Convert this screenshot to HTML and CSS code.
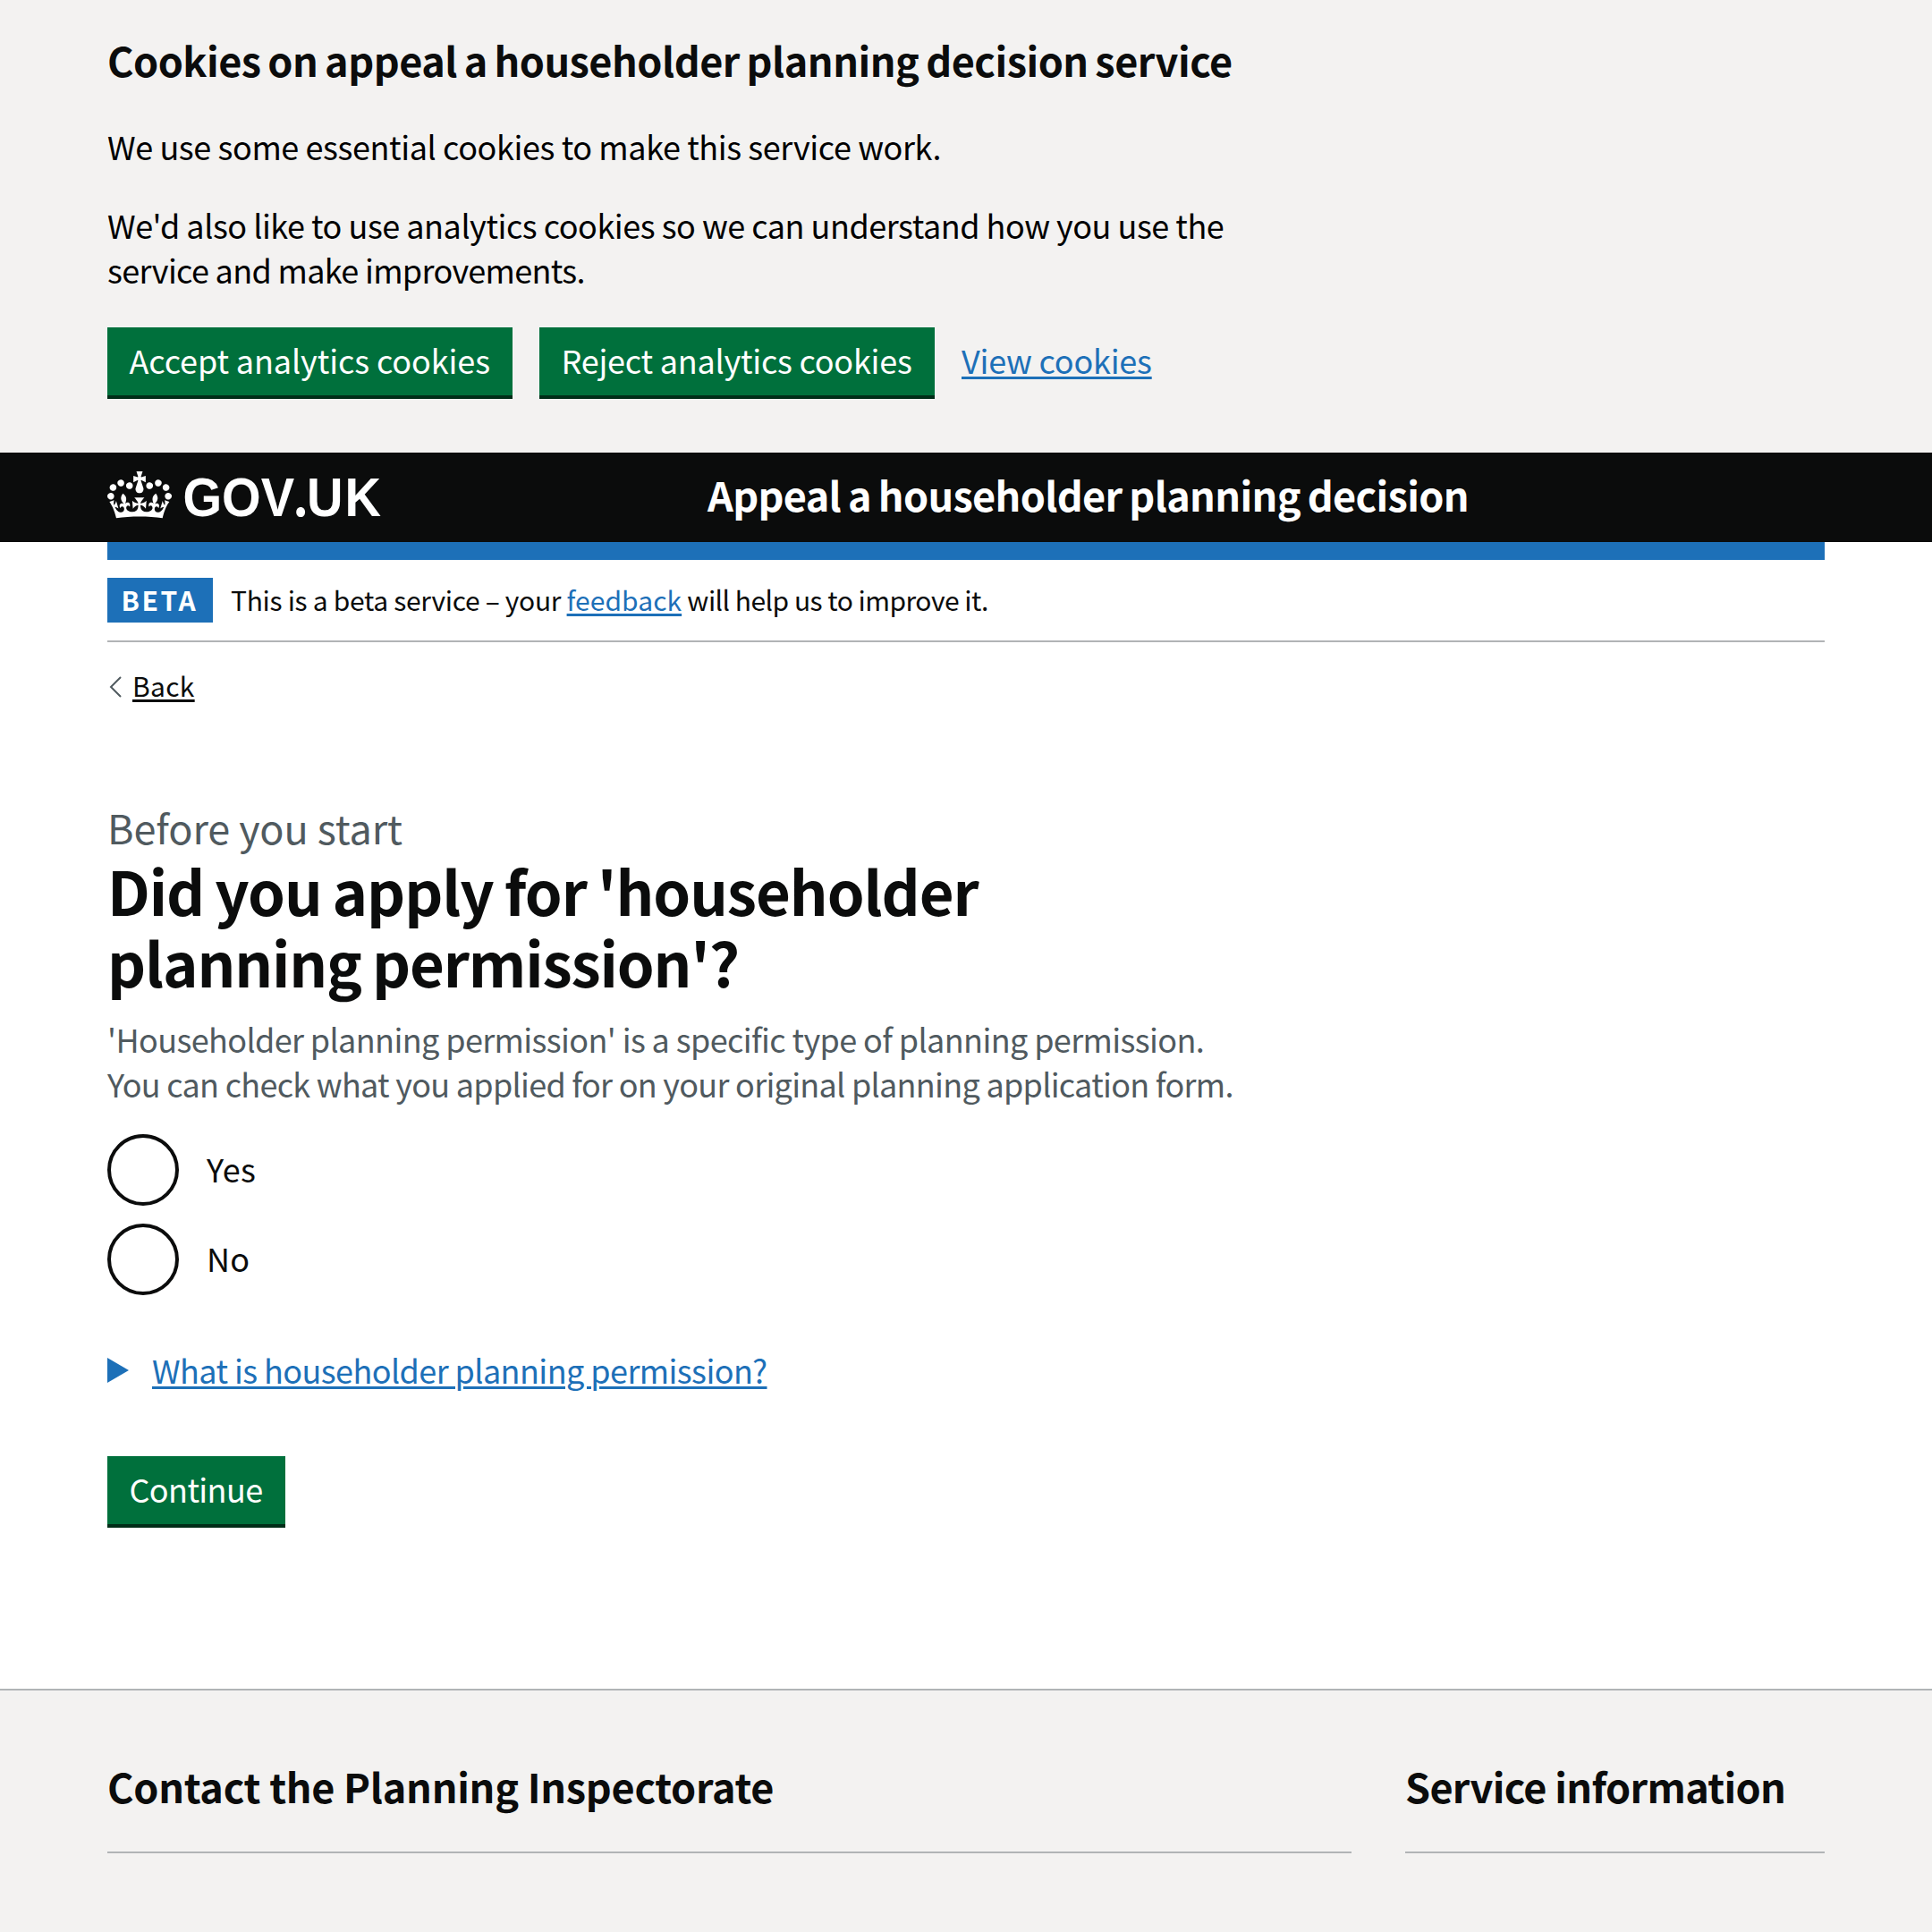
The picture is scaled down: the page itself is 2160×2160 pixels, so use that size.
FILE: index.html
```html
<!DOCTYPE html>
<html lang="en">
<head>
<meta charset="utf-8">
<title>Appeal a householder planning decision</title>
<link rel="stylesheet" href="styles.css">
</head>
<body>
<div class="cookie-banner">
  <div class="container">
    <h2 class="cookie-banner-title">Cookies on appeal a householder planning decision service</h2>
    <div class="cookie-banner-content">
      <p class="copy-essential">We use some essential cookies to make this service work.</p>
      <p><span class="copy-analytics">We'd also like to use analytics cookies so we can understand how you use the</span><br><span class="copy-improve">service and make improvements.</span></p>
    </div>
    <div class="button-group">
      <button class="button button-accept" type="button">Accept analytics cookies</button>
      <button class="button button-reject" type="button">Reject analytics cookies</button>
      <a class="link link-cookies" href="#">View cookies</a>
    </div>
  </div>
</div>

<header class="header">
  <div class="container header-inner">
    <svg class="logo" width="310" height="54" viewBox="0 0 310 54" role="img" aria-label="GOV.UK">
      <path transform="scale(.5455)" fill="#fff" fill-rule="evenodd" d="M25 30.2c3.5 1.5 7.7-.2 9.1-3.7 1.5-3.6-.2-7.8-3.9-9.2-3.6-1.4-7.6.3-9.1 3.9-1.4 3.5.3 7.5 3.9 9zM9 39.5c3.6 1.5 7.8-.2 9.2-3.7 1.5-3.6-.2-7.8-3.9-9.1-3.6-1.5-7.6.2-9.1 3.8-1.4 3.5.3 7.5 3.8 9zM4.4 57.2c3.5 1.5 7.7-.2 9.1-3.8 1.5-3.6-.2-7.7-3.9-9.1-3.5-1.5-7.6.3-9.1 3.8-1.4 3.5.3 7.6 3.9 9.1zm38.3-21.4c3.5 1.5 7.7-.2 9.1-3.8 1.5-3.6-.2-7.7-3.9-9.1-3.6-1.5-7.6.3-9.1 3.8-1.3 3.6.4 7.7 3.9 9.1zm64.4-5.6c-3.6 1.5-7.8-.2-9.1-3.7-1.5-3.6.2-7.8 3.8-9.2 3.6-1.4 7.7.3 9.2 3.9 1.3 3.5-.4 7.5-3.9 9zm15.9 9.3c-3.6 1.5-7.7-.2-9.1-3.7-1.5-3.6.2-7.8 3.7-9.1 3.6-1.5 7.7.2 9.2 3.8 1.5 3.5-.3 7.5-3.8 9zm4.7 17.7c-3.6 1.5-7.8-.2-9.2-3.8-1.5-3.6.2-7.7 3.9-9.1 3.6-1.5 7.7.3 9.2 3.8 1.3 3.5-.4 7.6-3.9 9.1zM89.3 35.8c-3.6 1.5-7.8-.2-9.2-3.8-1.4-3.6.2-7.7 3.9-9.1 3.6-1.5 7.7.3 9.2 3.8 1.4 3.6-.3 7.7-3.9 9.1zM69.7 17.7l8.9 4.7V9.3l-8.9 2.8c-.2-.3-.5-.6-.9-.9L72.4 0H59.6l3.5 11.2c-.3.3-.6.5-.9.9l-8.8-2.8v13.1l8.8-4.7c.3.3.6.7.9.9l-5 15.4v.1c-.2.8-.4 1.6-.4 2.4 0 4.1 3.1 7.5 7 8.1h.2c.3 0 .7.1 1 .1.4 0 .7 0 1-.1h.2c4-.6 7.1-4.1 7.1-8.1 0-.8-.1-1.7-.4-2.4V34l-5.1-15.4c.4-.2.7-.6 1-.9zM66 92.8c16.9 0 32.8 1.1 47.1 3.2 4-16.9 8.9-26.7 14-33.5l-9.6-3.4c1 4.9 1.1 7.2 0 10.2-1.5-1.4-3-4.3-4.2-8.7L108.6 76c2.8-2 5-3.2 7.5-3.3-4.4 9.4-10 11.9-13.6 11.2-4.3-.8-6.3-4.6-5.6-7.9 1-4.7 5.7-5.9 8-.5 4.3-8.7-3-11.4-7.6-8.8 7.1-7.2 7.9-13.5 2.1-21.1-8 6.1-8.1 12.3-4.5 20.8-4.7-5.4-12.1-2.5-9.5 6.2 3.4-5.2 7.9-2 7.2 3.1-.6 4.3-6.4 7.8-13.5 7.2-10.3-.9-10.9-8-11.2-13.8 2.5-.5 7.1 1.8 11 7.3L80.2 60c-4.1 4.4-8 5.3-12.3 5.4 1.4-4.4 8-11.6 8-11.6H55.5s6.4 7.2 7.9 11.6c-4.2-.1-8-1-12.3-5.4l1.4 16.4c3.9-5.5 8.5-7.7 10.9-7.3-.3 5.8-.9 12.8-11.1 13.8-7.2.6-12.9-2.9-13.5-7.2-.7-5 3.8-8.3 7.1-3.1 2.7-8.7-4.6-11.6-9.4-6.2 3.7-8.5 3.6-14.7-4.6-20.8-5.8 7.6-5 13.9 2.2 21.1-4.7-2.6-11.9.1-7.7 8.8 2.3-5.5 7.1-4.2 8.1.5.7 3.3-1.3 7.1-5.7 7.9-3.5.7-9-1.8-13.5-11.2 2.5.1 4.7 1.3 7.5 3.3l-4.7-15.4c-1.2 4.4-2.7 7.2-4.3 8.7-1.1-3-.9-5.3 0-10.2l-9.5 3.4c5 6.9 9.9 16.7 14 33.5 14.8-2.1 30.8-3.2 47.7-3.2z"/>
      <text class="logo-text" transform="scale(.92 1)" y="50"><tspan x="91.8">GOV</tspan><tspan class="logo-dot" x="225.5">.</tspan><tspan x="242.4">U</tspan><tspan x="288.6">K</tspan></text>
    </svg>
    <a class="header-title" href="#">Appeal a householder planning decision</a>
  </div>
</header>

<div class="container">
  <div class="header-bar"></div>
  <div class="phase-banner">
    <strong class="tag">BETA</strong>
    <span class="phase-text"><span class="phase-lead">This is a beta service – your </span><a class="link link-feedback" href="#">feedback</a><span class="phase-tail"> will help us to improve it.</span></span>
  </div>
  <a class="back" href="#">
    <svg class="back-icon" width="28" height="24" viewBox="0 0 28 24"><path d="M15 1 4 12l11 11" fill="none" stroke="#505a5f" stroke-width="2"/></svg>
    <span class="back-text">Back</span>
  </a>

  <main class="main">
    <span class="caption">Before you start</span>
    <h1 class="heading"><span class="heading-first">Did you apply for 'householder</span><br><span class="heading-second">planning permission'?</span></h1>
    <div class="hint"><span class="hint-first">'Householder planning permission' is a specific type of planning permission.</span><br><span class="hint-second">You can check what you applied for on your original planning application form.</span></div>
    <div class="radios">
      <label class="radio"><span class="radio-circle"></span><span class="radio-label">Yes</span></label>
      <label class="radio"><span class="radio-circle"></span><span class="radio-label">No</span></label>
    </div>
    <div class="details">
      <svg class="details-icon" width="50" height="28" viewBox="0 0 50 28"><path d="M0 0l24 14L0 28z" fill="#1d70b8"/></svg>
      <a class="link link-details" href="#">What is householder planning permission?</a>
    </div>
    <button class="button button-continue" type="button">Continue</button>
  </main>
</div>

<footer class="footer">
  <div class="container footer-columns">
    <h2 class="footer-title footer-contact">Contact the Planning Inspectorate</h2>
    <h2 class="footer-title footer-service">Service information</h2>
  </div>
</footer>
</body>
</html>
```

FILE: styles.css
```css
* { box-sizing: border-box; }

body {
  margin: 0;
  min-height: 2160px;
  display: flex;
  flex-direction: column;
  background: #fff;
  color: #0b0c0c;
  font-family: "Noto Sans CJK JP", "Noto Sans", sans-serif;
  font-size: 36px;
  line-height: 50px;
  white-space: nowrap;
}

h1, h2, p { margin: 0; }

.container { width: 1920px; margin: 0 auto; }

.link {
  color: #1d70b8;
  text-decoration: underline;
  text-decoration-thickness: 3px;
  text-underline-offset: 3px;
}

/* Cookie banner */
.cookie-banner { height: 506px; padding-top: 37px; background: #f3f2f1; }
.cookie-banner-title { font-size: 45px; line-height: 60px; letter-spacing: -.5px; word-spacing: -2px; }
.cookie-banner-content { display: flex; flex-direction: column; gap: 38px; margin-top: 41px; color: #000; }
.copy-essential { letter-spacing: -.4px; }
.copy-analytics { letter-spacing: -.48px; }
.copy-improve { letter-spacing: -.67px; }
.button-group { display: flex; gap: 30px; margin-top: 40px; }

.button {
  height: 76px;
  padding: 0 0 3px 24.5px;
  border: 0;
  background: #00703c;
  box-shadow: 0 4px 0 #002d18;
  color: #fff;
  font: inherit;
  line-height: 73px;
  text-align: left;
}
.button-accept { width: 453px; letter-spacing: -.11px; }
.button-reject { width: 442px; letter-spacing: -.24px; }
.button-continue { display: block; width: 199px; margin-top: 72px; letter-spacing: -.62px; }
.link-cookies { line-height: 73px; letter-spacing: -.22px; }

/* Header */
.header { height: 100px; background: #0b0c0c; }
.header-inner { display: flex; }
.logo { display: block; margin-top: 21px; overflow: visible; }
.logo-text { fill: #fff; font: 700 61px "Liberation Sans", Arial, sans-serif; }
.logo-dot { font-family: "Noto Sans CJK JP", sans-serif; font-size: 58px; }
.header-title {
  margin-left: 361px;
  color: #fff;
  font-size: 45px;
  font-weight: 700;
  line-height: 94px;
  letter-spacing: -.66px;
  word-spacing: -1.7px;
  text-decoration: none;
}
.header-bar { height: 20px; background: #1d70b8; }

/* Phase banner and back link */
.phase-banner {
  display: flex;
  gap: 20px;
  height: 92px;
  padding-top: 20px;
  border-bottom: 2px solid #b1b4b6;
  font-size: 30px;
  line-height: 48px;
}
.tag { width: 118px; height: 50px; padding-left: 15.5px; background: #1d70b8; color: #fff; letter-spacing: 2.6px; }
.phase-text { white-space: pre; }
.phase-lead { letter-spacing: -.31px; }
.link-feedback { letter-spacing: .06px; }
.phase-tail { letter-spacing: -.52px; }
.back { display: flex; align-items: center; height: 50px; margin-top: 23px; color: #0b0c0c; font-size: 30px; text-decoration: none; }
.back-icon { margin-top: 4px; }
.back-text { letter-spacing: .3px; text-decoration: underline; text-decoration-thickness: 3px; text-underline-offset: 3px; }

/* Question */
.main { margin-top: 104px; }
.caption { display: block; color: #505a5f; font-size: 45px; line-height: 60px; letter-spacing: -.1px; }
.heading { font-size: 67px; line-height: 80px; }
.heading-first { letter-spacing: -1.05px; word-spacing: -2.2px; }
.heading-second { letter-spacing: -1.15px; word-spacing: -2px; }
.hint { margin-top: 21px; color: #505a5f; }
.hint-first { letter-spacing: -.62px; }
.hint-second { letter-spacing: -.72px; }
.radios { display: flex; flex-direction: column; gap: 20px; margin-top: 32px; }
.radio { display: flex; gap: 31px; height: 80px; }
.radio-circle { width: 80px; height: 80px; border: 4px solid #0b0c0c; border-radius: 50%; }
.radio-label { line-height: 77px; letter-spacing: .25px; }
.details { display: flex; align-items: center; height: 50px; margin-top: 58px; }
.details-icon { margin-top: 2px; }
.link-details { letter-spacing: -.58px; }

/* Footer */
.footer { flex: 1; margin-top: 184px; padding-top: 77px; border-top: 2px solid #b1b4b6; background: #f3f2f1; }
.footer-columns { display: grid; grid-template-columns: 1391px 469px; gap: 60px; }
.footer-title { padding-bottom: 43px; border-bottom: 2px solid #b1b4b6; font-size: 45px; line-height: 60px; }
.footer-contact { letter-spacing: -.28px; }
.footer-service { letter-spacing: -.68px; }
```
